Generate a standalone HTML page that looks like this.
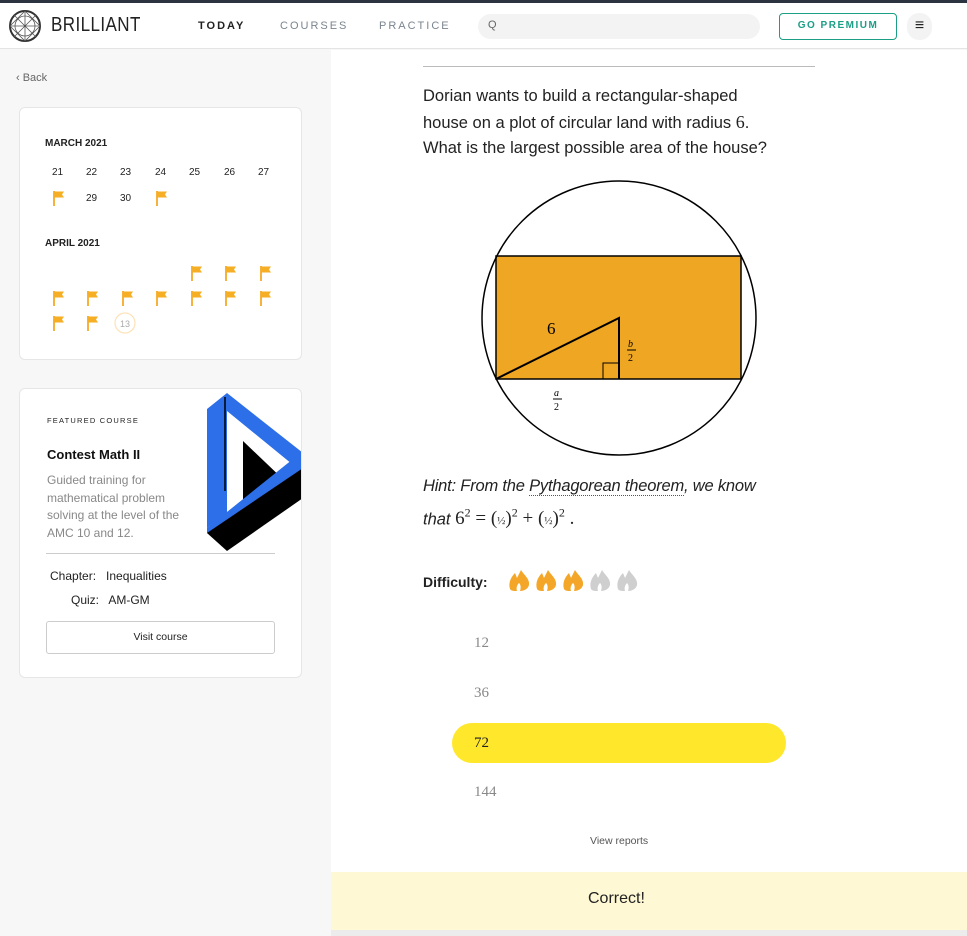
<!DOCTYPE html>
<html><head><meta charset="utf-8"><style>
*{margin:0;padding:0;box-sizing:border-box}
body{width:967px;height:936px;overflow:hidden;background:#f7f7f7;font-family:"Liberation Sans",sans-serif;position:relative}
.abs{position:absolute}
.top{left:0;top:0;width:967px;height:3px;background:#2c3340}
.nav{left:0;top:3px;width:967px;height:46px;background:#fff;border-bottom:1px solid #e4e4e4}
.navl{font-size:11px;letter-spacing:2px;color:#7a8590;top:17px}
.card{background:#fff;border:1px solid #e6e6e6;border-radius:6px}
.cal{font-size:10px;color:#222}
.serif{font-family:"Liberation Serif",serif}
</style></head><body>
<div class="abs top"></div>
<div class="abs nav">
  <svg class="abs" style="left:8px;top:6px" width="34" height="34" viewBox="0 0 34 34"><circle cx="17" cy="17" r="15" fill="none" stroke="#333" stroke-width="2"/><g stroke="#555" stroke-width="0.8" fill="none"><circle cx="17" cy="17" r="10"/><path d="M17 2L17 32M2 17L32 17M6 6L28 28M28 6L6 28M17 2L32 17L17 32L2 17Z"/></g></svg>
  <div class="abs" style="left:51px;top:11px;font-size:20px;color:#222;transform:scaleX(0.85);transform-origin:left;letter-spacing:0.5px">BRILLIANT</div>
  <div class="abs navl" style="left:198px;color:#222;font-weight:bold">TODAY</div>
  <div class="abs navl" style="left:280px">COURSES</div>
  <div class="abs navl" style="left:379px">PRACTICE</div>
  <div class="abs" style="left:478px;top:11px;width:282px;height:25px;background:#f3f3f3;border-radius:13px"><span style="position:absolute;left:10px;top:5px;font-size:11px;color:#666">Q</span></div>
  <div class="abs" style="left:779px;top:10px;width:118px;height:27px;border:1.5px solid #1a9e86;border-radius:4px;font-size:10px;letter-spacing:1.5px;color:#1a9e86;font-weight:bold;text-align:center;line-height:24px">GO PREMIUM</div>
  <div class="abs" style="left:907px;top:10px;width:25px;height:27px;background:#f3f3f3;border-radius:12px;text-align:center;line-height:26px;font-size:16px;color:#222">≡</div>
</div>
<div class="abs" style="left:331px;top:50px;width:636px;height:822px;background:#fff"></div>
<div class="abs" style="left:16px;top:72px;font-size:11px;color:#666">‹ Back</div>

<div class="abs card" style="left:19px;top:107px;width:283px;height:253px"></div>
<div class="abs cal" style="left:45px;top:138px;font-weight:bold;font-size:10px">MARCH 2021</div>
<div class="abs cal" style="left:45px;top:238px;font-weight:bold;font-size:10px">APRIL 2021</div>
<div class="abs cal" style="top:167px;left:52px">21</div><div class="abs cal" style="top:167px;left:86px">22</div><div class="abs cal" style="top:167px;left:120px">23</div><div class="abs cal" style="top:167px;left:155px">24</div><div class="abs cal" style="top:167px;left:189px">25</div><div class="abs cal" style="top:167px;left:224px">26</div><div class="abs cal" style="top:167px;left:258px">27</div>
<div class="abs cal" style="top:193px;left:86px">29</div><div class="abs cal" style="top:193px;left:120px">30</div>
<svg class="abs" style="left:0;top:0" width="330" height="340">
<defs><g id="f"><path d="M1 0V15" stroke="#f6b23a" stroke-width="2"/><path d="M1 0.5H11L9 3.5L11 6.5H1Z" fill="#f6ae25"/></g></defs>
<use href="#f" x="53" y="191"/><use href="#f" x="156" y="191"/>
<use href="#f" x="191" y="266"/><use href="#f" x="225" y="266"/><use href="#f" x="260" y="266"/>
<use href="#f" x="53" y="291"/><use href="#f" x="87" y="291"/><use href="#f" x="122" y="291"/><use href="#f" x="156" y="291"/><use href="#f" x="191" y="291"/><use href="#f" x="225" y="291"/><use href="#f" x="260" y="291"/>
<use href="#f" x="53" y="316"/><use href="#f" x="87" y="316"/>
<circle cx="125" cy="323" r="10" fill="none" stroke="#fde2b8" stroke-width="1.2"/>
<text x="125" y="327" font-size="9" fill="#aaa" text-anchor="middle" font-family="Liberation Sans">13</text>
</svg>

<div class="abs card" style="left:19px;top:388px;width:283px;height:290px;overflow:hidden">
  <svg class="abs" style="left:187px;top:4px" width="96" height="160" viewBox="0 0 96 160">
    <path d="M36 48L80 90L36 125Z" fill="#000"/>
    <path d="M20 0L96 60V80L20 18Z" fill="#2d6fe8"/>
    <path d="M0 16L20 0V120L0 135Z" fill="#2d6fe8"/>
    <path d="M0 135L96 58V88L20 150L0 140Z" fill="#2d6fe8"/>
    <path d="M0 140L96 75V105L20 158Z" fill="#000"/>
    <path d="M18 4V98" stroke="#000" stroke-width="1.5"/>
  </svg>
</div>
<div class="abs" style="left:47px;top:416px;font-size:7.5px;letter-spacing:1.2px;color:#222">FEATURED COURSE</div>
<div class="abs" style="left:47px;top:447px;font-size:13px;font-weight:bold;color:#111">Contest Math II</div>
<div class="abs" style="left:47px;top:472px;width:150px;font-size:12px;line-height:17.5px;color:#888">Guided training for mathematical problem solving at the level of the AMC 10 and 12.</div>
<div class="abs" style="left:46px;top:553px;width:229px;height:1px;background:#ccc"></div>
<div class="abs" style="left:50px;top:569px;font-size:12px;color:#222">Chapter:&nbsp;&nbsp; Inequalities</div>
<div class="abs" style="left:71px;top:593px;font-size:12px;color:#222">Quiz:&nbsp;&nbsp; AM-GM</div>
<div class="abs" style="left:46px;top:621px;width:229px;height:33px;border:1px solid #ccc;border-radius:3px;text-align:center;line-height:31px;font-size:10.5px;color:#222">Visit course</div>

<div class="abs" style="left:423px;top:66px;width:392px;height:1px;background:#bbb"></div>
<div class="abs" style="left:423px;top:84px;width:362px;font-size:16.5px;line-height:25.5px;color:#222">Dorian wants to build a rectangular-shaped house on a plot of circular land with radius <span class="serif" style="font-size:18px">6</span>. What is the largest possible area of the house?</div>

<svg class="abs" style="left:470px;top:170px" width="300" height="300">
<rect x="26" y="86" width="245" height="123" fill="#efa622" stroke="#000" stroke-width="1.5"/>
<circle cx="149" cy="148" r="137" fill="none" stroke="#000" stroke-width="1.5"/>
<path d="M26 209L149 148V209" fill="none" stroke="#000" stroke-width="2"/>
<rect x="133" y="193" width="16" height="16" fill="none" stroke="#000" stroke-width="1"/>
<text x="77" y="164" font-size="17" font-family="Liberation Serif">6</text>
<text x="158" y="177" font-size="10" font-style="italic" font-family="Liberation Serif">b</text><path d="M157 180H166" stroke="#000"/><text x="158" y="191" font-size="10" font-family="Liberation Serif">2</text>
<text x="84" y="226" font-size="10" font-style="italic" font-family="Liberation Serif">a</text><path d="M83 229H92" stroke="#000"/><text x="84" y="240" font-size="10" font-family="Liberation Serif">2</text>
</svg>

<div class="abs" style="left:423px;top:477px;font-size:16.5px;font-style:italic;color:#222;letter-spacing:-0.2px">Hint: From the <span style="border-bottom:1px dotted #555">Pythagorean theorem</span>, we know</div>
<div class="abs" style="left:423px;top:506px;font-size:16.5px;font-style:italic;color:#222">that <span class="serif" style="font-style:normal;font-size:19px">6<sup style="font-size:12px">2</sup> = (<span style="font-size:11px">½</span>)<sup style="font-size:12px">2</sup> + (<span style="font-size:11px">½</span>)<sup style="font-size:12px">2</sup> .</span></div>

<div class="abs" style="left:423px;top:574px;font-size:14px;font-weight:bold;color:#222">Difficulty:</div>
<svg class="abs" style="left:508px;top:567px" width="135" height="26">
<defs><path id="fl" d="M2 22C0 16 3 10 7 6L9 11L13 3C16 8 22 12 21 18C20 22 16 24 12 24C13 21 13 18 11 16C9 18 8 21 9 24C6 24 3 24 2 22Z"/></defs>
<use href="#fl" x="0" fill="#f3a627"/><use href="#fl" x="27" fill="#f3a627"/><use href="#fl" x="54" fill="#f3a627"/><use href="#fl" x="81" fill="#cfcfcf"/><use href="#fl" x="108" fill="#cfcfcf"/>
</svg>

<div class="abs serif" style="left:474px;top:635px;font-size:15px;color:#888">12</div>
<div class="abs serif" style="left:474px;top:685px;font-size:15px;color:#888">36</div>
<div class="abs" style="left:452px;top:723px;width:334px;height:40px;background:#ffe72b;border-radius:20px"></div>
<div class="abs serif" style="left:474px;top:735px;font-size:15px;color:#222">72</div>
<div class="abs serif" style="left:474px;top:784px;font-size:15px;color:#888">144</div>
<div class="abs" style="left:590px;top:835px;font-size:10.5px;color:#555">View reports</div>

<div class="abs" style="left:331px;top:872px;width:636px;height:58px;background:#fff8d4"></div>
<div class="abs" style="left:331px;top:930px;width:636px;height:6px;background:#ececec"></div>
<div class="abs" style="left:588px;top:890px;font-size:16px;color:#222">Correct!</div>
</body></html>
